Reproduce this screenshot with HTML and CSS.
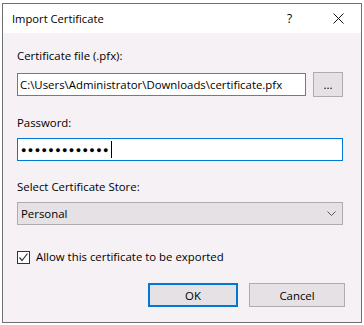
FILE: index.html
```html
<!DOCTYPE html>
<html lang="en">
<head>
    <meta charset="UTF-8">
    <title>Import Certificate</title>
    <link rel="stylesheet" href="styles.css">
</head>
<body>
    <div class="dialog">
        <div class="titlebar">
            <span class="title">Import Certificate</span>
            <span class="help">?</span>
            <span class="close">
                <svg width="11" height="11" viewBox="0 0 11 11"><path d="M0.5 0.5 L10.5 10.5 M10.5 0.5 L0.5 10.5" stroke="#111" stroke-width="1" fill="none"/></svg>
            </span>
        </div>
        <div class="content">
            <label class="label">Certificate file (.pfx):</label>
            <div class="file-row">
                <div class="field file-path">C:\Users\Administrator\Downloads\certificate.pfx</div>
                <button class="btn browse">...</button>
            </div>

            <label class="label gap">Password:</label>
            <div class="field password">
                <span class="dots">●●●●●●●●●●●●●</span><span class="caret"></span>
            </div>

            <label class="label gap">Select Certificate Store:</label>
            <div class="select">
                <span>Personal</span>
                <svg width="9" height="5" viewBox="0 0 9 5"><path d="M0.5 0.5 L4.5 4.5 L8.5 0.5" stroke="#555" stroke-width="1" fill="none"/></svg>
            </div>

            <div class="check-row">
                <span class="checkbox">
                    <svg width="11" height="11" viewBox="0 0 11 11"><path d="M1.5 5.5 L4 8.5 L9.5 1.5" stroke="#333" stroke-width="1.2" fill="none"/></svg>
                </span>
                <span>Allow this certificate to be exported</span>
            </div>

            <div class="actions">
                <button class="btn ok">OK</button>
                <button class="btn cancel">Cancel</button>
            </div>
        </div>
    </div>
</body>
</html>
```

FILE: styles.css
```css
:root {
    --panel-bg: #f5f1f5;
    --btn-bg: #e5e1e5;
    --btn-border: #adadad;
    --accent: #0078d7;
    --text: #000000;
}

* {
    margin: 0;
    padding: 0;
    box-sizing: border-box;
}

body {
    background: #ffffff;
    font-family: "Open Sans", "Noto Sans", sans-serif;
    font-size: 11.4px;
    color: var(--text);
    width: 364px;
    height: 325px;
    overflow: hidden;
}

.dialog {
    margin: 3px 0 0 2px;
    width: 360px;
    height: 320px;
    border: 1px solid #707070;
    display: flex;
    flex-direction: column;
}

.titlebar {
    height: 29px;
    background: #ffffff;
    display: flex;
    align-items: center;
    padding-left: 9px;
}

.title {
    flex: 1;
    font-size: 11.2px;
}

.help {
    width: 12px;
    margin-right: 34px;
    font-size: 12px;
}

.close {
    display: flex;
    margin-right: 17px;
}

.content {
    flex: 1;
    background: var(--panel-bg);
    padding: 15px 18px 0 14px;
    display: flex;
    flex-direction: column;
}

.label {
    display: block;
    line-height: 16px;
    margin-bottom: 8px;
}

.label.gap {
    margin-top: 18px;
    margin-bottom: 7px;
}

.file-row {
    display: flex;
    align-items: center;
    gap: 7px;
    height: 25px;
}

.field {
    height: 23px;
    background: #ffffff;
    border: 1px solid #7a7a7a;
    display: flex;
    align-items: center;
    padding-left: 2px;
    white-space: nowrap;
    overflow: hidden;
}

.file-path {
    width: 289px;
}

.btn {
    font-family: inherit;
    font-size: 11.4px;
    color: var(--text);
    background: var(--btn-bg);
    border: 1px solid var(--btn-border);
}

.browse {
    width: 30px;
    height: 25px;
    line-height: 20px;
}

.password {
    border-color: var(--accent);
    padding-left: 3px;
}

.dots {
    font-size: 9px;
    letter-spacing: 1.4px;
}

.caret {
    width: 1px;
    height: 17px;
    background: #000;
    margin-left: 1px;
}

.select {
    height: 23px;
    background: var(--btn-bg);
    border: 1px solid var(--btn-border);
    display: flex;
    align-items: center;
    justify-content: space-between;
    padding: 0 6px 0 3px;
}

.check-row {
    display: flex;
    align-items: center;
    gap: 6px;
    margin-top: 24px;
    line-height: 16px;
}

.checkbox {
    width: 13px;
    height: 13px;
    border: 1px solid #333;
    background: #fff;
    display: flex;
    align-items: center;
    justify-content: center;
}

.actions {
    display: flex;
    justify-content: flex-end;
    gap: 11px;
    margin-top: 18px;
    margin-right: -2px;
}

.actions .btn {
    height: 24px;
}

.ok {
    width: 90px;
    border: 2px solid var(--accent);
}

.cancel {
    width: 96px;
}
```
